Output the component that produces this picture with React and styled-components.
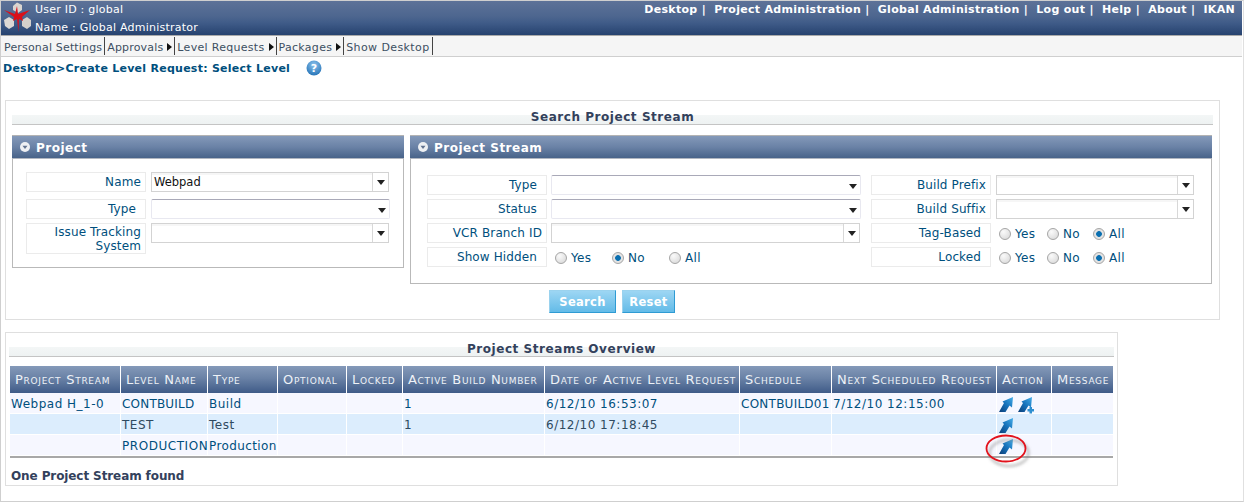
import React from 'react';
import styled, { createGlobalStyle } from 'styled-components';

const Global = createGlobalStyle`
  html, body { margin: 0; padding: 0; background: #fff; }
  body { font-family: "DejaVu Sans", Verdana, sans-serif; font-size: 11px; color: #004f7d; }
`;

const Page = styled.div`
  width: 1244px; height: 502px; box-sizing: border-box;
  border: 1px solid #cfcfcf; border-right-color: #e0e0e0;
  display: flex; flex-direction: column; overflow: hidden;
`;
const Header = styled.header`
  height: 34px; margin-right: 1px; flex: none;
  display: flex; justify-content: space-between; align-items: flex-start;
  background: linear-gradient(#5d7298, #4d668f 45%, #3f5b88 65%, #26426f);
  color: #fff; border-bottom: 1px solid #a9a9a9;
`;
const UserBlock = styled.div`display: flex; align-items: flex-start;`;
const UserLines = styled.div`
  display: flex; flex-direction: column; margin-left: 3px; padding-top: 0;
  line-height: 18px; letter-spacing: .23px;
`;
const TopNav = styled.nav`
  display: flex; padding: 1px 7px 0 0; font-weight: bold; font-size: 11px;
  line-height: 16px; white-space: pre; letter-spacing: .3px;
`;
const Toolbar = styled.div`
  height: 20px; margin-right: 1px; flex: none; display: flex; align-items: center;
  background: #f5f5f5; border-bottom: 1px solid #cfcfcf; color: #3c4f62;
  padding-left: 1px;
`;
const ToolItem = styled.div`
  display: flex; align-items: center; height: 18px; padding: 2px 2px 0; box-sizing: border-box;
  border-right: 1px solid #444; gap: 4px; letter-spacing: ${p => p.$ls}px;
`;
const Caret = styled.span`
  width: 0; height: 0; border-left: 5px solid #111;
  border-top: 4px solid transparent; border-bottom: 4px solid transparent;
`;
const Crumb = styled.div`
  flex: none; display: flex; align-items: center; height: 22px;
  padding: 0 0 0 2px; font-weight: bold; color: #004f7d; font-size: 11px; letter-spacing: .26px;
`;
const HelpBadge = styled.span`
  display: inline-flex; width: 16px; height: 16px; margin-left: 16px;
`;

const Panel = styled.section`
  flex: none; box-sizing: border-box; border: 1px solid #dfdfdf; padding: 0 ${p => p.$pad}px;
  margin-left: 4px; width: ${p => p.$w}px; margin-top: ${p => p.$top}px; height: ${p => p.$h}px;
`;
const PanelTitle = styled.h2`
  margin: 0; height: 26px; box-sizing: border-box; padding-top: 9px; text-align: center;
  font-size: 12px; line-height: 15px; font-weight: bold; color: #33415c; letter-spacing: .55px;
  background: linear-gradient(transparent 14px, #f3f6f6 14px, #eef2f2 23px, #c4c4c4 23px, #c4c4c4 24px, transparent 24px);
`;
const Columns = styled.div`display: flex; gap: 6px; margin-top: 8px; align-items: flex-start;`;
const SubPanel = styled.div`
  box-sizing: border-box; border: 1px solid #b9b9b9; width: ${p => p.$w}px; height: ${p => p.$h}px;
`;
const SubHead = styled.div`
  height: 24px; box-sizing: border-box; display: flex; align-items: center; gap: 6px;
  padding: 1px 0 0 8px; margin: -1px -1px 0; border-top: 1px solid #b3b3b3; border-bottom: 1px solid #b0b6c0;
  background: linear-gradient(#8499b9, #6a82a6 50%, #486389);
  color: #fff; font-size: 12px; font-weight: bold; letter-spacing: .5px;
`;
const ChevronDot = () => (
  <svg width="10" height="10" viewBox="0 0 10 10" style={{ marginTop: -2 }}>
    <circle cx="5" cy="5" r="5" fill="#eef0f3" />
    <path d="M2.5 3.8h5L5 7z" fill="#61728f" />
  </svg>
);
const ProjectForm = styled.div`
  display: grid; grid-template-columns: 120px 238px; grid-template-rows: 23px 20px 31px;
  column-gap: 5px; row-gap: 4px; padding: 13px 0 0 13px;
`;
const StreamBody = styled.div`display: flex; gap: 11px; padding: 16px 0 0 16px;`;
const StreamForm = styled.div`
  display: grid; grid-template-columns: 120px ${p => p.$sel}px; grid-auto-rows: 20px;
  column-gap: ${p => p.$gap}px; row-gap: 4px;
`;
const Label = styled.div`
  box-sizing: border-box; align-self: start; min-height: 20px; height: ${p => p.$tall ? '31px' : '20px'};
  border: 1px solid #ebebeb; display: flex; align-items: center; justify-content: flex-end;
  text-align: right; padding-right: ${p => p.$inset}px; padding-top: ${p => p.$tall ? 1 : 0}px; line-height: 14px; color: #004f7d;
  font-size: 12px; letter-spacing: .12px;
`;
const Combo = styled.div`
  box-sizing: border-box; height: 20px; align-self: start;
  border: 1px solid #d3d3d3; display: flex; background: linear-gradient(#f6f6f6 2px, #fff 2px);
  font-size: 11.5px; color: #111; line-height: 18px;
`;
const ComboText = styled.div`flex: 1; padding-left: 2px; border-right: 1px solid #d8d8d8;`;
const ArrowBox = styled.div`
  width: 15px; display: flex; align-items: center; justify-content: center; background: #fff;
`;
const Arrow = styled.span`
  width: 0; height: 0; border-top: 5px solid #222; border-left: 4px solid transparent; border-right: 4px solid transparent;
`;
const NativeSelect = styled.div`
  box-sizing: border-box; height: 20px; margin-right: -1px; border: 1px solid #e8e8f0; border-top-color: #a9a9b8;
  border-radius: 2px; display: flex; justify-content: flex-end; align-items: center; padding: 3px 3px 0 0; background: #fff;
`;
const Radios = styled.div`display: flex; align-items: center; padding: 1px 0 0 ${p => p.$pad}px;`;
const RadioOpt = styled.label`
  display: flex; align-items: center; gap: 4px; width: ${p => p.$w}px; font-size: 12px; letter-spacing: .3px; color: #004f7d;
`;
const RadioDot = styled.span`
  width: 12px; height: 12px; box-sizing: border-box; border-radius: 50%; flex: none; border: 1px solid #a5a5a5;
  background: ${p => p.$on ? 'radial-gradient(circle, #0a6fb0 0 2.5px, #e3e3e3 3.2px)' : 'radial-gradient(circle at 35% 30%, #fafafa, #d5d5d5)'};
`;
const Buttons = styled.div`display: flex; gap: 6px; margin: 6px 0 0 537px;`;
const Btn = styled.button`
  box-sizing: border-box; height: 23px; width: ${p => p.$w}px; padding: 0; border: 1px solid #2f9bd3;
  border-left-color: #9ad2ee; border-top-color: #9ad2ee;
  background: linear-gradient(#9dd6f3, #63bbe8); color: #fff; font: bold 11.5px "DejaVu Sans", sans-serif; letter-spacing: .3px;
`;

const Table = styled.table`
  border-collapse: separate; border-spacing: 0; table-layout: fixed; width: 1103px; margin: 7px 0 0 1px;
  border-bottom: 2px solid #a8a8a8; font-size: 12px; letter-spacing: .5px;
`;
const Th = styled.th`
  height: 27px; padding: 0 0 0 5px; box-sizing: border-box; text-align: left; color: #eef2f7; font-weight: normal;
  font-variant: small-caps; font-size: 13px; white-space: nowrap; letter-spacing: .72px; overflow: hidden;
  background: linear-gradient(#8499b9, #6a82a6 45%, #3f5b88);
  border-right: 1px solid #fff;
  &:last-child { border-right: 0; }
`;
const Tr = styled.tr`background: ${p => p.$alt ? '#dcedfd' : '#f6f7ff'};`;
const Td = styled.td`
  height: 21px; padding: 2px 0 0 1px; box-sizing: border-box; white-space: nowrap;
  border-right: 1px solid #fff; border-bottom: 1px solid #fff; color: ${p => p.$dark ? '#2f4a60' : '#004f7d'};
  letter-spacing: ${p => p.$ls ?? 0.5}px;
  &:last-child { border-right: 0; }
`;
const ActionCell = styled.div`position: relative; display: flex; gap: 4px; padding-left: 1px; align-items: center;`;
const Ring = styled.svg`position: absolute; left: -12px; top: -4px; pointer-events: none; overflow: visible;`;
const Found = styled.div`
  margin: 11px 0 0 2px; font-weight: bold; color: #33415c; font-size: 12px; letter-spacing: -.1px;
`;

const Logo = () => (
  <svg width="31" height="33" viewBox="0 0 31 33" style={{ flex: 'none' }}>
    <path d="M12 5l4-3.5L21 4v5l-4 3-5-3z" fill="#d9d5d0" />
    <path d="M3 19l5-3 5 3v6l-5 3-4-3z" fill="#dcd8d4" />
    <path d="M21 19l5-3 4 3v6l-4 3-5-3z" fill="#d4d0cc" />
    <path d="M16 5l1 8 12-4-8 7 1 4-4-2-.5 13-1.5-13-4 2 1-4L3 9l11 4z" fill="#d9101a" />
  </svg>
);
const Help = () => (
  <HelpBadge>
    <svg width="16" height="16" viewBox="0 0 16 16">
      <defs><radialGradient id="hb" cx="50%" cy="30%" r="75%"><stop offset="0" stopColor="#8ec3ec" /><stop offset="1" stopColor="#1f6fb5" /></radialGradient></defs>
      <circle cx="8" cy="8" r="7.5" fill="url(#hb)" />
      <text x="8" y="12" textAnchor="middle" fontSize="11" fontWeight="bold" fill="#fff" fontFamily="DejaVu Sans">?</text>
    </svg>
  </HelpBadge>
);
const Go = ({ plus, id }) => (
  <svg width="15" height="15" viewBox="0 0 15 15" style={{ flex: 'none', overflow: 'visible' }}>
    <defs><linearGradient id={id} x1="0" y1="1" x2="1" y2="0"><stop offset="0" stopColor="#0d3f78" /><stop offset=".5" stopColor="#1672bb" /><stop offset="1" stopColor="#46aee8" /></linearGradient></defs>
    <path d="M0 15L5 6 3.5 4.5 14 0l-1 10.5-2.5-2L6.5 15z" fill={`url(#${id})`} />
    {plus && <path d="M11.5 10h2.5v2h2v2.5h-2V16.5h-2.5v-2h-2V12h2z" fill="#2f8fd0" />}
  </svg>
);
const Head = ({ children }) => (
  <SubHead><ChevronDot />{children}</SubHead>
);
const Sel = () => <NativeSelect><Arrow /></NativeSelect>;
const Cmb = ({ value }) => (
  <Combo><ComboText>{value}</ComboText><ArrowBox><Arrow /></ArrowBox></Combo>
);
const RadioSet = ({ on, pad, widths }) => (
  <Radios $pad={pad}>
    {['Yes', 'No', 'All'].map((t, i) => (
      <RadioOpt key={t} $w={widths[i]}><RadioDot $on={on === t} />{t}</RadioOpt>
    ))}
  </Radios>
);

const cols = [111, 87, 70, 69, 56, 142, 195, 92, 165, 55, 61];
const heads = ['Project Stream', 'Level Name', 'Type', 'Optional', 'Locked', 'Active Build Number', 'Date of Active Level Request', 'Schedule', 'Next Scheduled Request', 'Action', 'Message'];

export default function App() {
  return (
    <Page>
      <Global />
      <Header>
        <UserBlock>
          <Logo />
          <UserLines><span>User ID : global</span><span>Name : Global Administrator</span></UserLines>
        </UserBlock>
        <TopNav>{'Desktop |  Project Administration |  Global Administration |  Log out |  Help |  About |  IKAN'}</TopNav>
      </Header>
      <Toolbar>
        <ToolItem $ls={0.17}>Personal Settings</ToolItem>
        <ToolItem $ls={0.17}>Approvals<Caret /></ToolItem>
        <ToolItem $ls={0.3}>Level Requests<Caret /></ToolItem>
        <ToolItem $ls={0.3}>Packages<Caret /></ToolItem>
        <ToolItem $ls={0.4}>Show Desktop</ToolItem>
      </Toolbar>
      <Crumb>Desktop&gt;Create Level Request: Select Level<Help /></Crumb>
      <Panel $w={1215} $h={220} $top={21} $pad={6}>
        <PanelTitle>Search Project Stream</PanelTitle>
        <Columns>
          <SubPanel $w={392} $h={133}>
            <Head>Project</Head>
            <ProjectForm>
              <Label $inset={4}>Name</Label><Cmb value="Webpad" />
              <Label $inset={9}>Type</Label><Sel />
              <Label $inset={4} $tall>Issue Tracking System</Label><Cmb />
            </ProjectForm>
          </SubPanel>
          <SubPanel $w={802} $h={149}>
            <Head>Project Stream</Head>
            <StreamBody>
              <StreamForm $sel={309} $gap={4}>
                <Label $inset={9}>Type</Label><Sel />
                <Label $inset={9}>Status</Label><Sel />
                <Label $inset={4}>VCR Branch ID</Label><Cmb />
                <Label $inset={9}>Show Hidden</Label><RadioSet on="No" pad={4} widths={[57, 57, 50]} />
              </StreamForm>
              <StreamForm $sel={198} $gap={5}>
                <Label $inset={4}>Build Prefix</Label><Cmb />
                <Label $inset={4}>Build Suffix</Label><Cmb />
                <Label $inset={9}>Tag-Based</Label><RadioSet on="All" pad={3} widths={[48, 46, 50]} />
                <Label $inset={9}>Locked</Label><RadioSet on="All" pad={3} widths={[48, 46, 50]} />
              </StreamForm>
            </StreamBody>
          </SubPanel>
        </Columns>
        <Buttons><Btn $w={67}>Search</Btn><Btn $w={53}>Reset</Btn></Buttons>
      </Panel>
      <Panel $w={1113} $h={154} $top={12} $pad={3}>
        <PanelTitle>Project Streams Overview</PanelTitle>
        <Table>
          <colgroup>{cols.map((w, i) => <col key={i} style={{ width: w }} />)}</colgroup>
          <thead><tr>{heads.map(h => <Th key={h}>{h}</Th>)}</tr></thead>
          <tbody>
            <Tr>
              <Td>Webpad H_1-0</Td><Td $ls={0.2}>CONTBUILD</Td><Td>Build</Td><Td /><Td /><Td>1</Td>
              <Td>6/12/10 16:53:07</Td><Td $ls={0.25}>CONTBUILD01</Td><Td>7/12/10 12:15:00</Td>
              <Td><ActionCell><Go id="g1" /><Go id="g2" plus /></ActionCell></Td><Td />
            </Tr>
            <Tr $alt>
              <Td /><Td $dark>TEST</Td><Td $dark>Test</Td><Td /><Td /><Td $dark>1</Td>
              <Td $dark>6/12/10 17:18:45</Td><Td /><Td />
              <Td><ActionCell><Go id="g3" /></ActionCell></Td><Td />
            </Tr>
            <Tr>
              <Td /><Td $ls={0.55}>PRODUCTION</Td><Td $ls={0.4}>Production</Td><Td /><Td /><Td /><Td /><Td /><Td />
              <Td>
                <ActionCell>
                  <Go id="g4" />
                  <Ring width="44" height="32" viewBox="0 0 44 32">
                    <defs><filter id="sh" x="-30%" y="-30%" width="160%" height="170%"><feGaussianBlur stdDeviation="1.8" /></filter></defs>
                    <ellipse cx="23" cy="18" rx="19.5" ry="13" fill="none" stroke="#777" strokeOpacity=".55" strokeWidth="2" filter="url(#sh)" />
                    <ellipse cx="20" cy="13.5" rx="19.5" ry="13" fill="none" stroke="#e2121c" strokeWidth="1.8" />
                  </Ring>
                </ActionCell>
              </Td><Td />
            </Tr>
          </tbody>
        </Table>
        <Found>One Project Stream found</Found>
      </Panel>
    </Page>
  );
}
